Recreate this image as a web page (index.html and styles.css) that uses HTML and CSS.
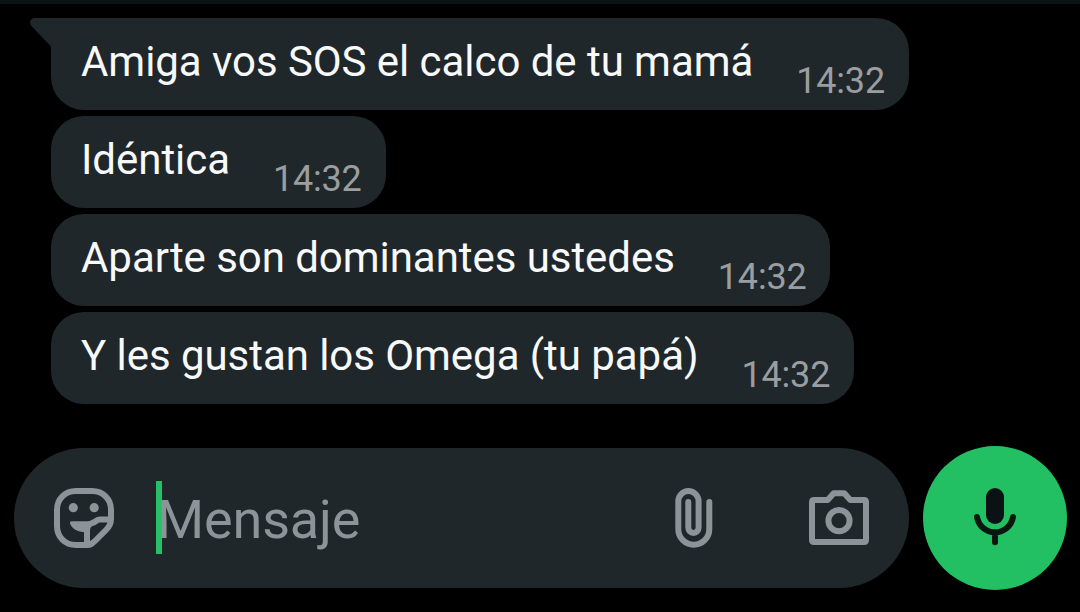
FILE: index.html
```
<!DOCTYPE html>
<html lang="es">
<head>
<meta charset="UTF-8">
<meta name="viewport" content="width=device-width,initial-scale=1.0">
<title>Chat</title>
<link rel="stylesheet" href="styles.css">
</head>
<body>
	<div class="chat">
		<ul class="list">
			<li class="msg first">
				<svg class="tail" width="22" height="29" viewBox="0 0 22 29"><path d="M22 0H5.500C.5 0-1.500 4.500 1.500 8L21 28.500H22Z"/></svg>
				<p class="con">Amiga vos SOS el calco de tu mamá</p>
				<span class="time">14:32</span>
			</li>
			<li class="msg">
				<p class="con">Idéntica</p>
				<span class="time">14:32</span>
			</li>
			<li class="msg">
				<p class="con">Aparte son dominantes ustedes</p>
				<span class="time">14:32</span>
			</li>
			<li class="msg">
				<p class="con">Y les gustan los Omega (tu papá)</p>
				<span class="time">14:32</span>
			</li>
		</ul>
		<div class="footer">
			<div class="bar">
				<svg class="icon" width="60" height="60" viewBox="0 0 60 60">
					<path d="M33 57H22C11 57 3 49 3 38V22C3 11 11 3 22 3H38C49 3 57 11 57 22V31C57 36 55 39 52 42L42 52C39 55 37 57 33 57Z"/>
					<path d="M56 31.500H46C42 31.500 42 34.500 38 35C35 36 33 39 33 43V56"/>
					<path class="fill" d="M17.500 33.200H39L34 44C25 45 18 41 16 35.500Q15.500 33.200 17.500 33.200Z"/>
					<circle class="fill" cx="19.300" cy="19.700" r="4.600"/>
					<circle class="fill" cx="40.200" cy="19.700" r="4.600"/>
				</svg>
				<div class="field"><span class="cursor"></span><span class="hint">Mensaje</span></div>
				<svg class="icon clip" width="38" height="60" viewBox="0 0 38 60">
					<path d="M34.300 14V41.200A15.500 15.500 0 0 1 3.300 41.200V13.200A10.150 10.150 0 0 1 23.600 13.200V39.800A5.150 5.150 0 0 1 13.300 39.800V14"/>
				</svg>
				<svg class="icon" width="60" height="60" viewBox="0 0 60 60">
					<path d="M18.700 12L24.700 5.300H35.300L41.300 12H55Q57 12 57 14V52Q57 54 55 54H5Q3 54 3 52V14Q3 12 5 12Z"/>
					<circle cx="30" cy="32.700" r="10.600"/>
				</svg>
			</div>
			<button class="mic">
				<svg width="42" height="58" viewBox="0 0 42 58">
					<rect x="12" y="0" width="18" height="36" rx="9"/>
					<path d="M3 29A18.250 18.250 0 0 0 39 29M21 44.500V54.300"/>
				</svg>
			</button>
		</div>
	</div>
</body>
</html>
```
FILE: styles.css
```
*{margin:0;padding:0;box-sizing:border-box;outline:none;}
body{
	height:612px;
	overflow:hidden;
	background:#000;
	font-family:Roboto,"Liberation Sans",sans-serif;
}
.chat{
	display:flex;
	flex-direction:column;
	height:612px;
	border-top:4px solid #0b1214;
}
.list{
	display:flex;
	flex-direction:column;
	align-items:flex-start;
	gap:6px;
	padding:14px 0 0 51px;
	list-style:none;
}
.msg{
	position:relative;
	display:flex;
	height:92px;
	padding:0 24px 0 30px;
	gap:43px;
	border-radius:33px;
	background:#20272b;
	white-space:nowrap;
}
.msg.first{border-top-left-radius:0;}
.tail{position:absolute;left:-21px;top:0;fill:#20272b;}
.con{padding-top:19px;font-size:42px;line-height:50px;letter-spacing:-.05px;color:#f7f9fa;}
.time{padding-top:42px;font-size:36px;line-height:42px;letter-spacing:-.2px;color:#9b9ea0;}

.footer{
	display:flex;
	align-items:center;
	gap:14px;
	margin-top:42px;
	padding-left:14px;
}
.bar{
	display:flex;
	align-items:center;
	width:895px;
	height:140px;
	padding:0 40px;
	border-radius:70px;
	background:#20272b;
}
.icon{
	flex:none;
	fill:none;
	stroke:#8b9498;
	stroke-width:6;
	stroke-linecap:round;
	stroke-linejoin:round;
}
.icon .fill{fill:#8b9498;stroke:none;}
.clip{margin-right:96px;}
.field{
	display:flex;
	align-items:center;
	flex:1;
	margin-left:42px;
	font-size:54px;
	line-height:73px;
	letter-spacing:-.15px;
	color:#8b9498;
}
.cursor{width:6px;height:73px;margin:0 -5px 2px 0;background:#25bf68;}
.hint{padding-top:2px;}
.mic{
	display:flex;
	align-items:center;
	justify-content:center;
	width:144px;
	height:144px;
	padding-bottom:2px;
	border:none;
	border-radius:50%;
	background:#23c063;
}
.mic svg{fill:#0a1216;}
.mic path{fill:none;stroke:#06180f;stroke-width:6;stroke-linecap:round;}
```
